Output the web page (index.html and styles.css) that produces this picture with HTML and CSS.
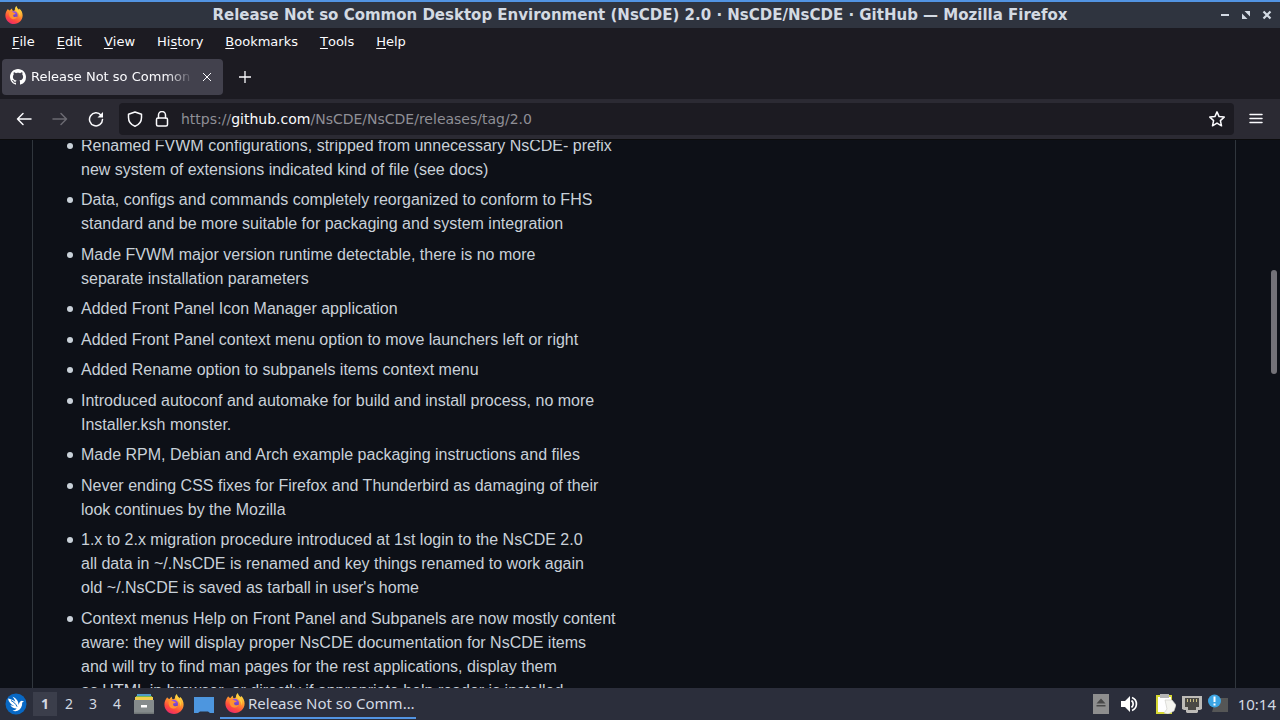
FILE: index.html
```html
<!DOCTYPE html>
<html lang="en">
<head>
<meta charset="utf-8">
<title>Release Not so Common Desktop Environment (NsCDE) 2.0</title>
<link rel="stylesheet" href="styles.css">
</head>
<body>
<svg class="defs" aria-hidden="true">
  <defs>
    <linearGradient id="flame" x1="0.8" y1="0" x2="0.3" y2="1">
      <stop offset="0" stop-color="#fff04a"/>
      <stop offset="0.4" stop-color="#ff9a2e"/>
      <stop offset="0.75" stop-color="#ff4a3d"/>
      <stop offset="1" stop-color="#e9286f"/>
    </linearGradient>
    <linearGradient id="globe" x1="0" y1="0" x2="0" y2="1">
      <stop offset="0" stop-color="#9a52e8"/>
      <stop offset="1" stop-color="#5f3fb8"/>
    </linearGradient>
    <symbol id="firefox" viewBox="0 0 20 20">
      <path fill="url(#flame)" d="M3.2 3.2c.6 1 1.300 1.500 2.300 1.800C6.200 3.600 7.200 2.900 8 2.700c-.3 1 .1 1.900.8 2.500 1.400.1 2.200-.2 2.200-1.600 0-1.500.8-2.700 1.900-3.500.2 2.100 1.600 3 2.700 4.200.3-.5.400-.9.300-1.500C18.300 4.700 19.600 7.500 19.600 10.600 19.600 16 15.300 20 10 20S.4 15.800.4 10.500c0-2.800 1-5 2.800-7.300z"/>
      <circle cx="9.800" cy="10" r="4.200" fill="url(#globe)"/>
      <path fill="#ff9230" d="M4.800 7.300c1.700-1.200 3.700-.9 5 .2.600.5 1.400.3 2 .5-.3 1-1.600 1.300-2.500 1.600-.5 1-.2 2.100.8 2.500 1.300.6 2.400-.5 3.500.1-1 2-3.100 2.800-5 2.400-2.900-.6-4.600-3.800-3.800-7.300z"/>
      <path fill="#ffcf3f" d="M12.700 1c.3 1.900 1.600 2.800 2.800 4.200 1.800 2.100 2.100 5 1.100 7.500 0-2.900-1-4.600-2.700-6C12.200 5.300 11.700 3 12.700 1z"/>
    </symbol>
  </defs>
</svg>

<header class="titlebar">
  <svg class="app-icon" aria-hidden="true"><use href="#firefox"/></svg>
  <h1 class="window-title">Release Not so Common Desktop Environment (NsCDE) 2.0 · NsCDE/NsCDE · GitHub — Mozilla Firefox</h1>
  <div class="window-buttons">
    <button type="button" aria-label="Minimize"><svg viewBox="0 0 10 10"><path d="M1 5h8" stroke="currentColor" stroke-width="2"/></svg></button>
    <button type="button" aria-label="Restore"><svg viewBox="0 0 10 10"><path d="M3.500 1H9v5.500zM1 3.500 6.500 9H1z" fill="currentColor"/></svg></button>
    <button type="button" aria-label="Close"><svg viewBox="0 0 10 10"><path d="m1.500 1.500 7 7m0-7-7 7" stroke="currentColor" stroke-width="2.200"/></svg></button>
  </div>
</header>

<nav class="menubar" aria-label="Menu">
  <button type="button"><u>F</u>ile</button>
  <button type="button"><u>E</u>dit</button>
  <button type="button"><u>V</u>iew</button>
  <button type="button">Hi<u>s</u>tory</button>
  <button type="button"><u>B</u>ookmarks</button>
  <button type="button"><u>T</u>ools</button>
  <button type="button"><u>H</u>elp</button>
</nav>

<div class="tabs">
  <div class="tab">
    <svg class="icon" viewBox="0 0 16 16" aria-hidden="true"><path fill="#fff" d="M8 0C3.580 0 0 3.580 0 8c0 3.540 2.290 6.530 5.470 7.590.4.070.55-.17.55-.38 0-.19-.01-.82-.01-1.490-2.010.37-2.530-.49-2.690-.94-.09-.23-.48-.94-.82-1.130-.28-.15-.68-.52-.01-.53.63-.01 1.080.58 1.230.82.72 1.210 1.870.87 2.330.66.07-.52.28-.87.51-1.070-1.780-.2-3.640-.89-3.640-3.950 0-.87.31-1.590.82-2.150-.08-.2-.36-1.020.08-2.120 0 0 .67-.21 2.200.82.64-.18 1.320-.27 2-.27s1.360.09 2 .27c1.530-1.040 2.200-.82 2.200-.82.44 1.100.16 1.920.08 2.120.51.56.82 1.270.82 2.150 0 3.070-1.870 3.750-3.650 3.950.29.25.54.73.54 1.480 0 1.070-.01 1.930-.01 2.200 0 .21.15.46.55.38A8 8 0 0 0 16 8c0-4.420-3.580-8-8-8z"/></svg>
    <span class="tab-label">Release Not so Common</span>
    <button type="button" class="tab-close" aria-label="Close tab"><svg viewBox="0 0 10 10"><path d="m1 1 8 8m0-8-8 8" stroke="currentColor"/></svg></button>
  </div>
  <button type="button" class="new-tab" aria-label="New tab"><svg viewBox="0 0 12 12"><path d="M6 0v12M0 6h12" stroke="currentColor" stroke-width="1.300"/></svg></button>
</div>

<div class="toolbar">
  <button type="button" class="tool" aria-label="Back"><svg class="icon" viewBox="0 0 16 16"><path class="line" d="M15 8H1.500M7 2.500 1.500 8 7 13.500"/></svg></button>
  <button type="button" class="tool" aria-label="Forward" disabled><svg class="icon" viewBox="0 0 16 16"><path class="line" d="M1 8h13.500M9 2.500 14.500 8 9 13.500"/></svg></button>
  <button type="button" class="tool" aria-label="Reload"><svg class="icon" viewBox="0 0 16 16"><path class="line" d="M13 4.200A6.500 6.500 0 1 0 14.500 8.500"/><path fill="currentColor" d="M15 1v5.500H9.500z"/></svg></button>
  <div class="urlbar">
    <svg class="icon" viewBox="0 0 16 16" aria-hidden="true"><path class="line" d="M8 1 14.500 3.300V6.500C14.500 10.500 12 13.800 8 15.200 4 13.800 1.500 10.500 1.500 6.500V3.300z"/></svg>
    <svg class="icon" viewBox="0 0 16 16" aria-hidden="true"><path class="line" d="M4.500 7V4a3.500 3.500 0 0 1 7 0v3"/><rect class="line" x="2.500" y="7" width="11" height="8" rx="1.500"/></svg>
    <a class="url" href="https://github.com/NsCDE/NsCDE/releases/tag/2.0">https://<span class="domain">github.com</span>/NsCDE/NsCDE/releases/tag/2.0</a>
    <button type="button" class="bookmark" aria-label="Bookmark this page"><svg class="icon" viewBox="0 0 16 16"><path class="line" d="m8 .9 2.100 4.700 5.100.5-3.800 3.500 1.100 5.200L8 12.100l-4.500 2.700 1.100-5.200L.8 6.100l5.100-.5z"/></svg></button>
  </div>
  <button type="button" class="tool menu" aria-label="Application menu"><svg class="icon" viewBox="0 0 16 16"><path class="line" d="M2 3.500h12M2 7.500h12M2 11.500h12"/></svg></button>
</div>

<main class="viewport">
  <article class="release">
    <ul class="notes">
      <li>Renamed FVWM configurations, stripped from unnecessary NsCDE- prefix<br>new system of extensions indicated kind of file (see docs)</li>
      <li>Data, configs and commands completely reorganized to conform to FHS<br>standard and be more suitable for packaging and system integration</li>
      <li>Made FVWM major version runtime detectable, there is no more<br>separate installation parameters</li>
      <li>Added Front Panel Icon Manager application</li>
      <li>Added Front Panel context menu option to move launchers left or right</li>
      <li>Added Rename option to subpanels items context menu</li>
      <li>Introduced autoconf and automake for build and install process, no more<br>Installer.ksh monster.</li>
      <li>Made RPM, Debian and Arch example packaging instructions and files</li>
      <li>Never ending CSS fixes for Firefox and Thunderbird as damaging of their<br>look continues by the Mozilla</li>
      <li>1.x to 2.x migration procedure introduced at 1st login to the NsCDE 2.0<br>all data in ~/.NsCDE is renamed and key things renamed to work again<br>old ~/.NsCDE is saved as tarball in user's home</li>
      <li>Context menus Help on Front Panel and Subpanels are now mostly content<br>aware: they will display proper NsCDE documentation for NsCDE items<br>and will try to find man pages for the rest applications, display them<br>as HTML in browser, or directly if appropriate help reader is installed.</li>
    </ul>
  </article>
  <div class="scroll-thumb"></div>
</main>

<footer class="taskbar">
  <button type="button" class="launcher" aria-label="Start menu"><svg viewBox="0 0 22 22"><circle cx="11" cy="11" r="10.500" fill="#0868c4"/><path fill="#fff" d="M3 5.500c3 .6 5.300 1.600 7.300 3.200C9.800 6.800 8.700 5 7.500 3.800c3.700 1.500 6.200 4.300 6 8.200.8-2.500 1.500-3.900 3.300-4.300l2.200.9-1.800.8c.2 3.800-1.500 6.900-4.600 8.300-1.700.7-3.500.6-5.100-.2 2.100-.1 3.400-.8 4.100-2-3 .1-5.200-1.300-6.200-3.400 1.200.6 2.600.8 3.800.6C6 11.700 3.600 9.200 3 5.500z"/><path d="M6 7.500c2.800 1.700 5 3.300 6 6.200" fill="none" stroke="#0868c4"/></svg></button>
  <div class="desktops">
    <button type="button" class="desk current">1</button>
    <button type="button" class="desk">2</button>
    <button type="button" class="desk">3</button>
    <button type="button" class="desk">4</button>
  </div>
  <div class="quick">
    <button type="button" class="launcher" aria-label="File manager"><svg viewBox="0 0 22 22"><path fill="#4f9bc8" d="M4 1h14v4H4z"/><path fill="#79b94c" d="M3 3h16v3H3z"/><path fill="#f2cd4c" d="M2 4h18v4H2z"/><path fill="#858b8c" d="M1 7h20v13.500H1z"/><path fill="#6f7576" d="M1 19.500h20v1.500H1z"/><rect x="8" y="12" width="6" height="2.500" fill="#fff"/></svg></button>
    <button type="button" class="launcher" aria-label="Firefox"><svg viewBox="0 0 22 22"><use href="#firefox" x="1" y="1" width="20" height="20"/></svg></button>
    <button type="button" class="launcher" aria-label="Show desktop"><svg viewBox="0 0 22 22"><path fill="#4d96df" d="M1 4h20v16h-4l-2-1.500H7L5 20H1z"/></svg></button>
  </div>
  <button type="button" class="task"><svg class="task-icon" aria-hidden="true"><use href="#firefox"/></svg><span>Release Not so Comm…</span></button>
  <div class="tray">
    <svg class="tray-icon eject" viewBox="0 0 20 20" role="img" aria-label="Removable media"><path fill="#8e8e8e" d="M2 0h16v20H2z"/><path fill="#484848" d="m10 4.500 4.500 5h-9zM5.500 11h9v1.500h-9z"/></svg>
    <svg class="tray-icon volume" viewBox="0 0 20 20" role="img" aria-label="Volume"><path fill="#fff" d="M2 7h4l5-5v16l-5-5H2z"/><path d="M12.500 6.500a4.500 4.500 0 0 1 0 7M13 3.500a7 7 0 0 1 0 13" fill="none" stroke="#fff" stroke-width="1.700"/></svg>
    <svg class="tray-icon" viewBox="0 0 20 20" role="img" aria-label="Clipboard"><path fill="#d6d832" d="M0 1h16v19H0z"/><path fill="#fff" d="M2 3h13v15H2z"/><path fill="#b5b5b5" d="M4 0h9v4H4z"/><path fill="#f5f5f0" stroke="#c9c9c4" stroke-width=".6" d="M9 6h7l4 5-2 6-6 3-4-1 3-4z"/></svg>
    <svg class="tray-icon" viewBox="0 0 20 20" role="img" aria-label="Network"><path fill="#bdbbb7" d="M0 2h20v13l-2 1h-2v2l-1 1H5l-1-1v-2H2l-2-1z"/><path fill="#4a4945" d="M3 4h14v9h-3v3H6v-3H3z"/><path d="M5.500 5v3m3-3v3m3-3v3m3-3v3" stroke="#c9bd81"/></svg>
    <svg class="tray-icon" viewBox="0 0 20 20" role="img" aria-label="Updates"><path fill="#555656" d="M8 4h12v14H4z"/><circle cx="6.500" cy="7" r="6.500" fill="#3da5e3"/><path d="M6.500 2.500v5.500M6.500 9.500v2" stroke="#fff" stroke-width="2"/></svg>
    <time class="clock">10:14</time>
  </div>
</footer>
</body>
</html>
```
FILE: styles.css
```css
* { box-sizing: border-box; }

body {
  margin: 0;
  height: 100vh;
  display: flex;
  flex-direction: column;
  overflow: hidden;
  background: #0d1017;
  color: #fbfbfe;
  font: 14px/20px "Noto Sans", "DejaVu Sans", sans-serif;
}

button {
  display: flex;
  align-items: center;
  justify-content: center;
  margin: 0;
  padding: 0;
  border: 0;
  background: none;
  color: inherit;
  font: inherit;
}

.defs { position: absolute; width: 0; height: 0; }
.icon { display: block; flex: none; width: 16px; height: 16px; }
.line {
  fill: none;
  stroke: currentColor;
  stroke-width: 1.5;
  stroke-linecap: round;
  stroke-linejoin: round;
}

/* Window frame */
.titlebar {
  display: grid;
  grid-template-columns: 72px 1fr 72px;
  align-items: center;
  flex: none;
  height: 28px;
  border-top: 2px solid #5294e2;
  background: #2f343f;
  color: #d3dae3;
}
.app-icon { width: 18px; height: 18px; margin-left: 5px; }
.window-title {
  margin: 0;
  overflow: hidden;
  text-align: center;
  white-space: nowrap;
  font: bold 15px/20px "DejaVu Sans", sans-serif;
}
.window-buttons { display: flex; justify-content: flex-end; gap: 11px; padding-right: 8px; }
.window-buttons svg { display: block; width: 10px; height: 10px; }

/* Browser chrome */
.menubar {
  display: flex;
  flex: none;
  gap: 22px;
  height: 27px;
  padding: 0 12px;
  background: #1c1b22;
  font: 13px/20px "DejaVu Sans", sans-serif;
}
.menubar u { text-underline-offset: 2px; }
.tabs {
  display: flex;
  flex: none;
  align-items: center;
  gap: 10px;
  height: 44px;
  padding: 0 2px;
  background: #1c1b22;
  font: 13px/20px "DejaVu Sans", sans-serif;
}
.tab {
  display: flex;
  align-items: center;
  gap: 5px;
  width: 221px;
  height: 36px;
  padding: 0 8px;
  border-radius: 4px;
  background: #42414d;
}
.tab-label {
  flex: 1;
  overflow: hidden;
  white-space: nowrap;
  mask-image: linear-gradient(to left, transparent, #000 28px);
}
.tab-close { width: 16px; height: 16px; }
.tab-close svg { width: 10px; height: 10px; }
.new-tab { width: 24px; height: 24px; }
.new-tab svg { width: 12px; height: 12px; }
.toolbar {
  display: flex;
  flex: none;
  align-items: center;
  gap: 4px;
  height: 40px;
  padding: 0 8px;
  background: #2b2a33;
}
.tool { width: 32px; height: 32px; }
.tool:disabled { color: #6b6a72; }
.menu { margin-left: 2px; }
.urlbar {
  display: flex;
  flex: 1;
  align-items: center;
  gap: 11px;
  height: 32px;
  margin-left: 3px;
  padding: 0 9px 0 8px;
  border-radius: 4px;
  background: #1c1b22;
  font: 14px/20px "DejaVu Sans", sans-serif;
}
.url { flex: 1; color: #8f8f96; text-decoration: none; white-space: nowrap; }
.domain { color: #fbfbfe; }

/* Page */
.viewport {
  position: relative;
  flex: 1;
  min-height: 0;
  overflow: hidden;
  padding: 0 44px 0 32px;
  border-top: 1px solid #0c0c0d;
}
.release {
  display: flow-root;
  height: 100%;
  padding: 0 32px;
  border: solid #30363d;
  border-width: 0 1px;
}
.notes {
  margin: -6px 0 0;
  padding-left: 16px;
  color: #c9d1d9;
  font: 16px/24px "Liberation Sans", Arial, sans-serif;
  list-style: none;
}
.notes li { position: relative; margin-bottom: 6px; }
.notes li:nth-child(even) { margin-bottom: 7px; }
.notes li::before {
  content: "";
  position: absolute;
  top: 9px;
  left: -14px;
  width: 6px;
  height: 6px;
  border-radius: 50%;
  background: currentColor;
}
.scroll-thumb {
  position: absolute;
  top: 130px;
  right: 3px;
  width: 6px;
  height: 19%;
  border-radius: 3px;
  background: #737278;
}

/* Desktop panel */
.taskbar {
  display: flex;
  flex: none;
  align-items: center;
  height: 32px;
  padding: 0 4px 0 5px;
  background: #2b2e3b;
  color: #d3dae3;
  font-size: 15px;
}
.launcher { width: 22px; height: 22px; }
.launcher svg { width: 22px; height: 22px; }
.desktops { display: flex; margin-left: 6px; }
.desk { width: 24px; height: 24px; font-size: 14px; }
.current { background: #3b3e4b; font-weight: bold; }
.quick { display: flex; gap: 8px; margin-left: 4px; }
.task {
  justify-content: flex-start;
  gap: 3px;
  width: 196px;
  height: 30px;
  margin-left: 5px;
  padding-left: 5px;
  border-bottom: 2px solid #5294e2;
}
.task-icon { width: 20px; height: 20px; }
.tray { display: flex; align-items: center; gap: 6px; margin-left: auto; }
.tray-icon { width: 20px; height: 20px; }
.eject { margin-right: 2px; }
.volume { margin-right: 11px; }
.clock { margin-left: 4px; }
```
